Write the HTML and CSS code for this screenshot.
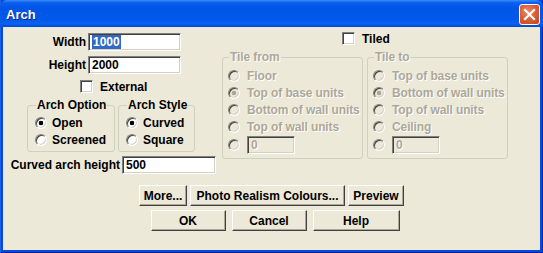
FILE: index.html
```html
<!DOCTYPE html>
<html>
  <head>
    <title>Arch</title>
    <link rel="stylesheet" href="styles.css">
  </head>
  <body>
    <div class="window">
      <div class="titlebar">
        <span class="title">Arch</span>
        <button class="close" aria-label="Close">
          <svg width="13" height="13" viewBox="0 0 13 13">
            <path d="M2 2 L11 11 M11 2 L2 11" stroke="#fff" stroke-width="2.2" stroke-linecap="square"/>
          </svg>
        </button>
      </div>

      <div class="client">
        <div class="top">
          <div class="left">
            <div class="fields">
              <label for="width">Width</label>
              <div class="textbox"><span class="selected">1000</span></div>
              <label for="height">Height</label>
              <div class="textbox">2000</div>
            </div>
            <label class="check external"><input type="checkbox"> External</label>

            <div class="groups">
              <fieldset class="group option">
                <legend>Arch Option</legend>
                <label class="radio"><input type="radio" name="opt" checked> Open</label>
                <label class="radio"><input type="radio" name="opt"> Screened</label>
              </fieldset>
              <fieldset class="group style">
                <legend>Arch Style</legend>
                <label class="radio"><input type="radio" name="sty" checked> Curved</label>
                <label class="radio"><input type="radio" name="sty"> Square</label>
              </fieldset>
            </div>

            <div class="fields curved">
              <label>Curved arch height</label>
              <div class="textbox">500</div>
            </div>
          </div>

          <div class="right">
            <label class="check tiled"><input type="checkbox"> Tiled</label>
            <div class="groups">
              <fieldset class="group tile disabled">
                <legend>Tile from</legend>
                <label class="radio"><input type="radio" name="from" disabled> Floor</label>
                <label class="radio"><input type="radio" name="from" checked disabled> Top of base units</label>
                <label class="radio"><input type="radio" name="from" disabled> Bottom of wall units</label>
                <label class="radio"><input type="radio" name="from" disabled> Top of wall units</label>
                <label class="radio last"><input type="radio" name="from" disabled> <span class="textbox small">0</span></label>
              </fieldset>
              <fieldset class="group tile disabled">
                <legend>Tile to</legend>
                <label class="radio"><input type="radio" name="to" disabled> Top of base units</label>
                <label class="radio"><input type="radio" name="to" checked disabled> Bottom of wall units</label>
                <label class="radio"><input type="radio" name="to" disabled> Top of wall units</label>
                <label class="radio"><input type="radio" name="to" disabled> Ceiling</label>
                <label class="radio last"><input type="radio" name="to" disabled> <span class="textbox small">0</span></label>
              </fieldset>
            </div>
          </div>
        </div>

        <div class="buttons row1">
          <button class="btn more">More...</button>
          <button class="btn photo">Photo Realism Colours...</button>
          <button class="btn preview">Preview</button>
        </div>
        <div class="buttons row2">
          <button class="btn wide">OK</button>
          <button class="btn wide">Cancel</button>
          <button class="btn wide help">Help</button>
        </div>
      </div>
    </div>
  </body>
</html>
```

FILE: styles.css
```css
* {
  padding: 0;
  margin: 0;
  box-sizing: border-box;
}

body {
  width: 543px;
  height: 253px;
  overflow: hidden;
  font-family: "Liberation Sans", Arial, sans-serif;
  font-size: 12px;
  font-weight: 700;
  color: #000;
}

.window {
  width: 543px;
  height: 253px;
  display: flex;
  flex-direction: column;
  background: #0a48dc;
  padding: 0 3px 3px 3px;
  box-shadow: inset 1px 0 #1d5ee8, inset -1px 0 #0030b8, inset 0 -1px #0024a0;
}

/* title bar */
.titlebar {
  height: 27px;
  margin: 0 -3px;
  padding: 0 3px 0 6px;
  display: flex;
  align-items: center;
  justify-content: space-between;
  border-radius: 7px 7px 0 0;
  background: linear-gradient(to bottom, #3d8df5 0%, #0a5ff0 10%, #0055e6 30%, #0058ea 70%, #0a62f2 88%, #0047cc 100%);
}

.title {
  color: #fff;
  font-size: 13px;
  font-weight: 700;
  text-shadow: 1px 1px #0a1e8a;
  margin-top: 1px;
}

.close {
  width: 21px;
  height: 21px;
  border: 1px solid #fff;
  border-radius: 3px;
  background: radial-gradient(circle at 40% 35%, #e9876a 0%, #d9592f 55%, #c2431e 100%);
  display: flex;
  align-items: center;
  justify-content: center;
  margin-top: 1px;
}

/* client area */
.client {
  flex: 1;
  background: #ece9d8;
}

.top {
  display: flex;
}

.left {
  width: 213px;
  padding: 6px 0 0 6px;
}

.fields {
  display: grid;
  grid-template-columns: 77px 93px;
  column-gap: 2px;
  row-gap: 5px;
  align-items: center;
}

.fields label {
  text-align: right;
}

.fields.curved {
  grid-template-columns: 111px 94px;
  margin-top: 4px;
}

.textbox {
  height: 18px;
  padding: 1px 0 0 3px;
  line-height: 15px;
  background: #fff;
  border: 1px solid;
  border-color: #808080 #fff #fff #808080;
  box-shadow: inset 1px 1px #404040, inset -1px -1px #d4d0c8;
}

.selected {
  background: #316ac5;
  color: #fff;
  padding: 0 1px;
}

.check {
  display: flex;
  align-items: center;
  height: 13px;
}

.check input,
.radio input {
  appearance: none;
  -webkit-appearance: none;
  flex: none;
  width: 13px;
  height: 13px;
  margin-right: 7px;
  background: #fff;
  border: 1px solid;
  border-color: #808080 #fff #fff #808080;
  box-shadow: inset 1px 1px #404040, inset -1px -1px #d4d0c8;
}

.external {
  margin: 6px 0 0 71px;
}

.groups {
  display: flex;
  gap: 3px;
}

.left .groups {
  margin: 5px 0 0 18px;
}

.group {
  border: 1px solid #d0d0bf;
  border-radius: 3px;
  padding: 2px 0 3px 7px;
}

.group legend {
  margin-left: 1px;
  padding: 0 1px;
  line-height: 14px;
}

.option {
  width: 88px;
}

.style {
  width: 77px;
}

.radio {
  display: flex;
  align-items: center;
  height: 17px;
}

.radio input {
  width: 12px;
  height: 12px;
  border-radius: 50%;
  margin-right: 5px;
}

.radio input:checked {
  background: radial-gradient(circle, #000 0, #000 2px, #fff 2.6px);
}

/* right side */
.right {
  margin-left: 6px;
  padding-top: 5px;
}

.tiled {
  margin-left: 120px;
}

.right .groups {
  margin-top: 5px;
  gap: 4px;
}

.tile {
  width: 141px;
  padding: 3px 0 3px 5px;
  letter-spacing: -0.1px;
}

.tile .radio input {
  margin-right: 7px;
}

.disabled legend,
.disabled .radio {
  color: #aca899;
  text-shadow: 1px 1px #fff;
}

.disabled .radio input {
  background: #ece9d8;
}

.disabled .radio input:checked {
  background: radial-gradient(circle, #aca899 0, #aca899 2px, #ece9d8 2.6px);
}

.radio.last {
  height: 20px;
}

.textbox.small {
  display: block;
  width: 48px;
  background: #ece9d8;
  color: #aca899;
}

/* buttons */
.buttons {
  display: flex;
  justify-content: center;
  gap: 3px;
}

.row1 {
  margin-top: 11px;
}

.row2 {
  margin-top: 4px;
  padding-left: 7px;
  gap: 7px 6px;
}

.btn {
  height: 21px;
  font-family: "Liberation Sans", Arial, sans-serif;
  font-size: 12px;
  font-weight: 700;
  color: #000;
  background: #ece9d8;
  border: 1px solid;
  border-color: #fff #404040 #404040 #fff;
  box-shadow: inset -1px -1px #aca899;
}

.more {
  width: 48px;
}

.photo {
  width: 155px;
}

.preview {
  width: 56px;
}

.wide {
  width: 75px;
}

.help {
  width: 87px;
}
```
